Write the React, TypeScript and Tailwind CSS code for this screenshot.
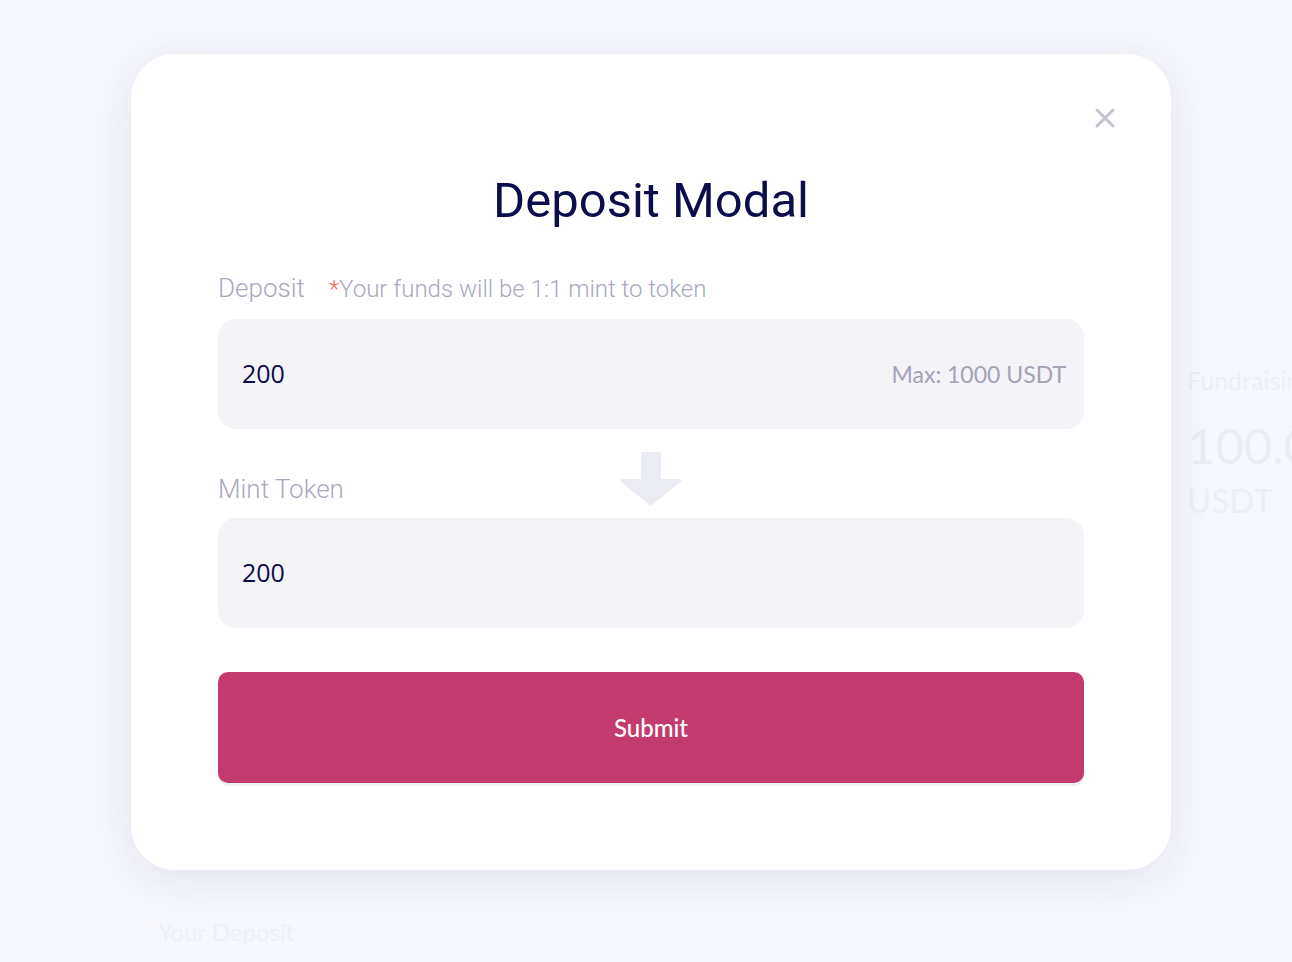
import React from "react";

const fieldLabel =
  "font-['Roboto','Liberation_Sans',sans-serif] font-light text-[26px] leading-[32px] text-[#a9a8bd]";

const inputBox =
  "flex items-center justify-between h-[110px] rounded-[18px] bg-[#f3f3f8] pl-6 pr-[18px]";

const valueText =
  "font-['Open_Sans','Liberation_Sans',sans-serif] text-[25px] text-[#0b0d4a]";

const DownArrow = () => (
  <svg width="64" height="54" viewBox="0 0 64 54" fill="#ebebf3">
    <path d="M22 2 a2 2 0 0 1 2 -2 h16 a2 2 0 0 1 2 2 v25 h19 a1.5 1.5 0 0 1 1 2.5 l-29 23.5 a2 2 0 0 1 -2.4 0 l-29 -23.5 a1.5 1.5 0 0 1 1 -2.5 h19.4 z" />
  </svg>
);

const CloseIcon = () => (
  <svg width="22" height="22" viewBox="0 0 22 22" stroke="#c3c3cd" strokeWidth="3" strokeLinecap="round">
    <line x1="3" y1="3" x2="19" y2="19" />
    <line x1="19" y1="3" x2="3" y2="19" />
  </svg>
);

const App = () => {
  return (
    <div className="relative h-[962px] w-full overflow-hidden bg-[#f7f8fd]">
      {/* page behind the modal */}
      <div className="flex h-full flex-col justify-between font-['Lato','Liberation_Sans',sans-serif]">
        <div className="pl-[1187px] pt-[362px] whitespace-nowrap">
          <div className="text-[25px] leading-[36px] text-[#edeff6]">Fundraising</div>
          <div className="mt-[19px] text-[49px] leading-[56px] text-[#ebedf5]">100.000</div>
          <div className="mt-[7px] text-[33px] leading-[40px] text-[#edeff6]">USDT</div>
        </div>
        <div className="pl-[158px] pb-[12px] text-[24px] leading-[36px] text-[#eef0f7]">Your Deposit</div>
      </div>

      {/* modal */}
      <div className="absolute inset-0 pl-[131px] pt-[54px]">
        <div className="relative w-[1040px] h-[816px] rounded-[44px] bg-white px-[87px] pt-[116px] shadow-[0_8px_40px_rgba(50,50,110,0.11)]">
          <button type="button" className="absolute right-[55px] top-[53px] cursor-pointer">
            <CloseIcon />
          </button>

          <h2 className="text-center font-['Roboto','Liberation_Sans',sans-serif] text-[49px] leading-[62px] font-normal text-[#0b0d4a]">
            Deposit Modal
          </h2>

          <div className="mt-[39px] flex items-baseline">
            <span className={fieldLabel}>Deposit</span>
            <span className="ml-[24px] font-['Roboto','Liberation_Sans',sans-serif] font-light text-[24px] text-[#a9a8bd]">
              <span className="text-[#ef6a57]">*</span>Your funds will be 1:1 mint to token
            </span>
          </div>
          <div className={`mt-[12px] ${inputBox}`}>
            <span className={valueText}>200</span>
            <span className="font-['Lato','Liberation_Sans',sans-serif] text-[23px] text-[#a3a2b6]">
              Max: 1000 USDT
            </span>
          </div>

          <div className="relative mt-[44px]">
            <div className="absolute left-1/2 -top-[21px] -translate-x-1/2">
              <DownArrow />
            </div>
            <div className={`relative ${fieldLabel}`}>Mint Token</div>
            <div className={`relative mt-[13px] ${inputBox}`}>
              <span className={valueText}>200</span>
            </div>
          </div>

          <button
            type="button"
            className="mt-[44px] flex h-[111px] w-full items-center justify-center rounded-[10px] bg-[#c33a6f] font-['Lato','Liberation_Sans',sans-serif] text-[24px] font-medium text-white shadow-[0_3px_0_#eeeff3]"
          >
            Submit
          </button>
        </div>
      </div>
    </div>
  );
};

export default App;
